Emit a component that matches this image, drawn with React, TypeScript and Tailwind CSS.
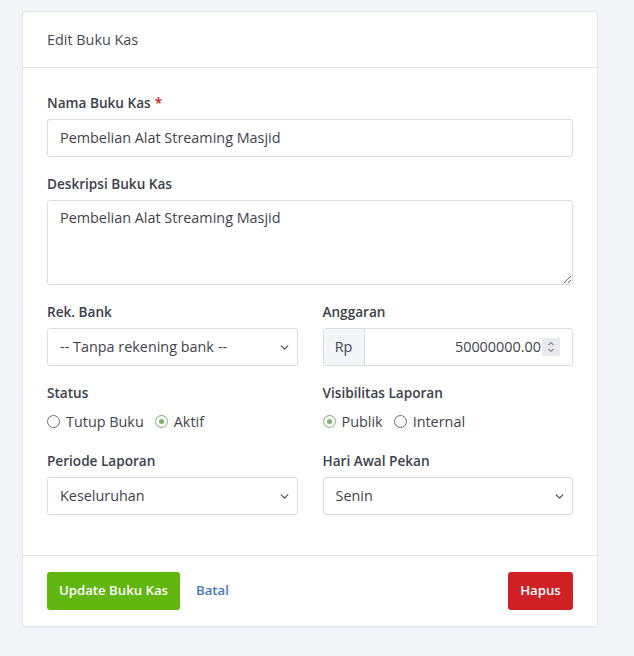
import { ChevronDown } from "lucide-react";

const font = { fontFamily: '"Open Sans", "Liberation Sans", sans-serif' };

function Label({ children, required }: { children: React.ReactNode; required?: boolean }) {
  return (
    <div className="mb-[6px] text-[13.6px] leading-[21px] font-semibold text-[#3b414b]">
      {children}
      {required && <span className="ml-1 text-[#d0222a]">*</span>}
    </div>
  );
}

function Select({ value }: { value: string }) {
  return (
    <div className="flex h-[38px] items-center justify-between rounded-[3px] border border-[#dcdde1] bg-white pl-[12px] pr-[6px] text-[14.4px] text-[#3f444c]">
      <span>{value}</span>
      <ChevronDown className="h-[13px] w-[13px] text-[#555]" strokeWidth={2.5} />
    </div>
  );
}

function Radio({ label, checked }: { label: string; checked?: boolean }) {
  return (
    <label className="flex items-center gap-[6px] text-[14.4px] text-[#3f444c]">
      {checked ? (
        <span className="flex h-[13px] w-[13px] items-center justify-center rounded-full border-[1.5px] border-[#7fae6a]">
          <span className="h-[5px] w-[5px] rounded-full bg-[#7fae6a]" />
        </span>
      ) : (
        <span className="h-[13px] w-[13px] rounded-full border-[1.5px] border-[#6d6f73]" />
      )}
      {label}
    </label>
  );
}

export default function App() {
  return (
    <div className="min-h-screen bg-[#f4f5f8] px-[22px] pt-[11px] pb-[29px]" style={font}>
      <div className="w-[576px] rounded-[3px] border border-[#e3e4e8] bg-white shadow-[0_1px_2px_rgba(0,0,0,0.04)]">
        <div className="flex h-[56px] items-center border-b border-[#e3e4e8] px-[24px] text-[14.4px] text-[#454a52]">
          Edit Buku Kas
        </div>

        <div className="px-[24px] pt-[24px] pb-[24px]">
          <div className="mb-[16px]">
            <Label required>Nama Buku Kas</Label>
            <div className="flex h-[38px] items-center rounded-[3px] border border-[#dcdde1] px-[12px] text-[14.4px] text-[#3f444c]">
              Pembelian Alat Streaming Masjid
            </div>
          </div>

          <div className="mb-[16px]">
            <Label>Deskripsi Buku Kas</Label>
            <textarea
              readOnly
              defaultValue="Pembelian Alat Streaming Masjid"
              className="block h-[85px] w-full rounded-[3px] border border-[#dcdde1] px-[12px] py-[7px] text-[14.4px] leading-[20px] text-[#3f444c] outline-none"
              style={font}
            />
          </div>

          <div className="grid grid-cols-2 gap-x-[25px]">
            <div className="mb-[16px]">
              <Label>Rek. Bank</Label>
              <Select value="-- Tanpa rekening bank --" />
            </div>
            <div className="mb-[16px]">
              <Label>Anggaran</Label>
              <div className="flex h-[38px] rounded-[3px] border border-[#dcdde1] text-[14.4px] text-[#3f444c]">
                <div className="flex w-[41px] items-center justify-center border-r border-[#dcdde1] bg-[#f4f5f8]">
                  Rp
                </div>
                <div className="flex flex-1 items-center justify-end gap-[1px] pr-[12px]">
                  <span>50000000.00</span>
                  <span className="flex h-[18px] w-[18px] flex-col items-center justify-center bg-[#e9eaee] text-[#8a8c90]">
                    <svg width="8" height="14" viewBox="0 0 8 14" fill="none" stroke="currentColor" strokeWidth="1.2">
                      <polyline points="1.5,5 4,2.5 6.5,5" />
                      <polyline points="1.5,9 4,11.5 6.5,9" />
                    </svg>
                  </span>
                </div>
              </div>
            </div>

            <div className="mb-[16px]">
              <Label>Status</Label>
              <div className="flex h-[25px] items-center gap-[11px]">
                <Radio label="Tutup Buku" />
                <Radio label="Aktif" checked />
              </div>
            </div>
            <div className="mb-[16px]">
              <Label>Visibilitas Laporan</Label>
              <div className="flex h-[25px] items-center gap-[11px]">
                <Radio label="Publik" checked />
                <Radio label="Internal" />
              </div>
            </div>

            <div className="mb-[16px]">
              <Label>Periode Laporan</Label>
              <Select value="Keseluruhan" />
            </div>
            <div className="mb-[16px]">
              <Label>Hari Awal Pekan</Label>
              <Select value="Senin" />
            </div>
          </div>
        </div>

        <div className="flex items-center border-t border-[#e3e4e8] px-[24px] py-[16px]">
          <button className="h-[38px] rounded-[3px] bg-[#61b60f] px-[12px] text-[13.2px] font-semibold text-white">
            Update Buku Kas
          </button>
          <button className="ml-[16px] text-[13.2px] font-semibold text-[#4778c2]">Batal</button>
          <button className="ml-auto h-[38px] w-[65px] rounded-[3px] bg-[#cf2026] text-[13.2px] font-semibold text-white">
            Hapus
          </button>
        </div>
      </div>
    </div>
  );
}
